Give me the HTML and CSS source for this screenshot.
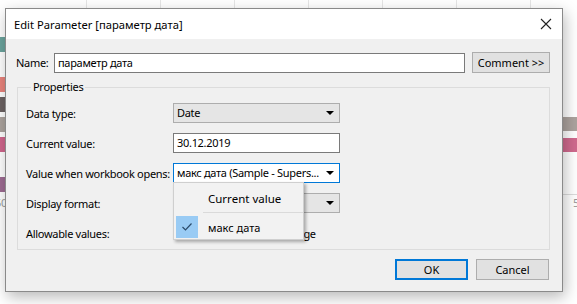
FILE: index.html
```html
<!DOCTYPE html>
<html lang="ru">
<head>
    <meta charset="UTF-8">
    <title>Edit Parameter</title>
    <link rel="stylesheet" href="styles.css">
</head>
<body>
    <div class="desk">
        <!-- chart behind the dialog -->
        <div class="gridlines"></div>
        <div class="bar bar-l1"></div>
        <div class="bar bar-l2"></div>
        <div class="bar bar-l3"></div>
        <div class="bar bar-l4"></div>
        <div class="bar bar-l5"></div>
        <div class="bar bar-l6"></div>
        <span class="tick tick-l">50</span>
        <div class="bar bar-r1"></div>
        <div class="bar bar-r2"></div>
        <div class="axis-r"></div>
        <span class="tick tick-r">5</span>

        <div class="dialog">
            <div class="titlebar">
                <span>Edit Parameter [параметр дата]</span>
                <svg class="close" width="12" height="12" viewBox="0 0 12 12">
                    <path d="M1 1 L11 11 M11 1 L1 11" stroke="#222" stroke-width="1.1" fill="none"/>
                </svg>
            </div>

            <div class="dlg-body">
                <div class="name-row">
                    <label class="name-label">Name:</label>
                    <div class="field name-field">параметр дата</div>
                    <button class="btn comment">Comment &gt;&gt;</button>
                </div>

                <fieldset class="props">
                    <legend>Properties</legend>
                    <div class="prop-row">
                        <span class="prop-label">Data type:</span>
                        <div class="select">Date<span class="arrow"></span></div>
                    </div>
                    <div class="prop-row">
                        <span class="prop-label">Current value:</span>
                        <div class="field value-field">30.12.2019</div>
                    </div>
                    <div class="prop-row">
                        <span class="prop-label">Value when workbook opens:</span>
                        <div class="select focused">макс дата (Sample - Supers...<span class="arrow"></span></div>
                    </div>
                    <div class="prop-row">
                        <span class="prop-label">Display format:</span>
                        <div class="select"><span class="arrow"></span></div>
                    </div>
                    <div class="prop-row">
                        <span class="prop-label">Allowable values:</span>
                        <div class="radios">
                            <span class="radio">All</span>
                            <span class="radio">List</span>
                            <span class="radio">Range</span>
                        </div>
                    </div>
                </fieldset>

                <div class="actions">
                    <button class="btn ok">OK</button>
                    <button class="btn">Cancel</button>
                </div>
            </div>

            <div class="popup">
                <div class="popup-item">Current value</div>
                <div class="popup-sep"></div>
                <div class="popup-item checked">
                    <span class="check">
                        <svg width="12" height="10" viewBox="0 0 12 10">
                            <path d="M1.5 5 L4.5 8 L10.5 1.5" stroke="#2a4a6a" stroke-width="1.2" fill="none"/>
                        </svg>
                    </span>
                    макс дата
                </div>
            </div>
        </div>
    </div>
</body>
</html>
```

FILE: styles.css
```css
* {
    margin: 0;
    padding: 0;
    box-sizing: border-box;
}

body {
    font-family: "Noto Sans", "Open Sans", sans-serif;
    font-size: 11px;
    letter-spacing: -0.3px;
    color: #000;
    background: #fff;
}

.desk {
    position: relative;
    width: 577px;
    height: 304px;
    overflow: hidden;
    background: #fff;
}

.gridlines {
    position: absolute;
    left: 86px;
    top: 0;
    width: 480px;
    height: 12px;
    background: repeating-linear-gradient(to right, #e6e6e6 0, #e6e6e6 1px, transparent 1px, transparent 74px);
}

.bar {
    position: absolute;
    height: 15px;
}

.bar-l1 { left: 0; width: 8px; top: 37px; background: #6aa39c; }
.bar-l2 { left: 0; width: 8px; top: 77px; background: #e8837c; }
.bar-l3 { left: 0; width: 8px; top: 97px; background: #6b6262; }
.bar-l4 { left: 0; width: 8px; top: 117px; background: #aba39d; }
.bar-l5 { left: 0; width: 8px; top: 137px; background: #cf668c; }
.bar-l6 { left: 0; width: 8px; top: 177px; background: #9d6b92; }
.bar-r1 { left: 560px; width: 20px; top: 117px; height: 14px; background: #aca39e; }
.bar-r2 { left: 560px; width: 20px; top: 138px; height: 14px; background: #d06a8e; }

.axis-r {
    position: absolute;
    left: 560px;
    width: 20px;
    top: 194px;
    height: 1px;
    background: #dcdcdc;
}

.tick {
    position: absolute;
    top: 195px;
    font-size: 11px;
    color: #9a9a9a;
}

.tick-l { left: -5px; }
.tick-r { left: 573px; }

/* dialog window */
.dialog {
    position: absolute;
    left: 5px;
    top: 8px;
    width: 558px;
    height: 284px;
    background: #f0f0f0;
    border: 1px solid #8a8a8a;
    box-shadow: 2px 5px 14px rgba(0, 0, 0, 0.28);
}

.titlebar {
    height: 30px;
    background: #fff;
    display: flex;
    align-items: center;
    justify-content: space-between;
    padding: 0 10px 0 8px;
    font-size: 11.2px;
    letter-spacing: 0;
}

.dlg-body {
    padding: 13px 12px 0 10px;
}

.name-row {
    display: flex;
    align-items: center;
    height: 21px;
}

.name-label {
    width: 38px;
}

.field {
    background: #fff;
    border: 1px solid #7a7a7a;
    height: 20px;
    line-height: 18px;
    padding: 0 3px;
}

.name-field {
    width: 411px;
}

.btn {
    font-family: inherit;
    font-size: 11px;
    background: #e1e1e1;
    border: 1px solid #adadad;
    height: 21px;
    width: 73px;
    color: #000;
}

.comment {
    width: 78px;
    margin-left: 7px;
}

.props {
    margin-top: 7px;
    margin-left: 1px;
    border: 1px solid #dcdcdc;
    padding: 4px 8px 1px 8px;
}

.props legend {
    margin-left: 5px;
    padding: 0 2px;
    line-height: 14px;
}

.prop-row {
    display: flex;
    align-items: center;
    height: 30px;
}

.prop-label {
    width: 147px;
    white-space: nowrap;
}

.select {
    position: relative;
    width: 167px;
    height: 20px;
    line-height: 18px;
    background: #e5e5e5;
    border: 1px solid #adadad;
    padding: 0 3px;
    white-space: nowrap;
}

.select.focused {
    background: #fff;
    border-color: #0078d7;
}

.value-field {
    width: 167px;
}

.arrow {
    position: absolute;
    right: 5px;
    top: 7px;
    border-left: 4px solid transparent;
    border-right: 4px solid transparent;
    border-top: 4px solid #000;
}

.radios {
    display: flex;
    gap: 16px;
}

.radio {
    display: flex;
    align-items: center;
    gap: 4px;
}

.radio::before {
    content: "";
    width: 11px;
    height: 11px;
    border: 1px solid #333;
    border-radius: 50%;
    background: #fff;
}

.actions {
    display: flex;
    justify-content: flex-end;
    gap: 8px;
    margin-top: 9px;
    padding-right: 1px;
}

.btn.ok {
    border: 2px solid #0078d7;
}

/* open combo list */
.popup {
    position: absolute;
    left: 167px;
    top: 173px;
    width: 131px;
    height: 58px;
    background: #f2f2f2;
    border: 1px solid #cfcfcf;
    box-shadow: 2px 2px 3px rgba(0, 0, 0, 0.3);
    padding-top: 3px;
}

.popup-item {
    display: flex;
    align-items: center;
    height: 24px;
    padding-left: 34px;
    font-size: 11.5px;
    letter-spacing: 0;
}

.popup-item.checked {
    position: relative;
    height: 22px;
    font-size: 11px;
}

.popup-sep {
    height: 1px;
    margin: 2px 0 3px 29px;
    background: #dadada;
}

.check {
    position: absolute;
    left: 2px;
    top: 0;
    width: 22px;
    height: 22px;
    background: #99cbf4;
    display: flex;
    align-items: center;
    justify-content: center;
}
```
